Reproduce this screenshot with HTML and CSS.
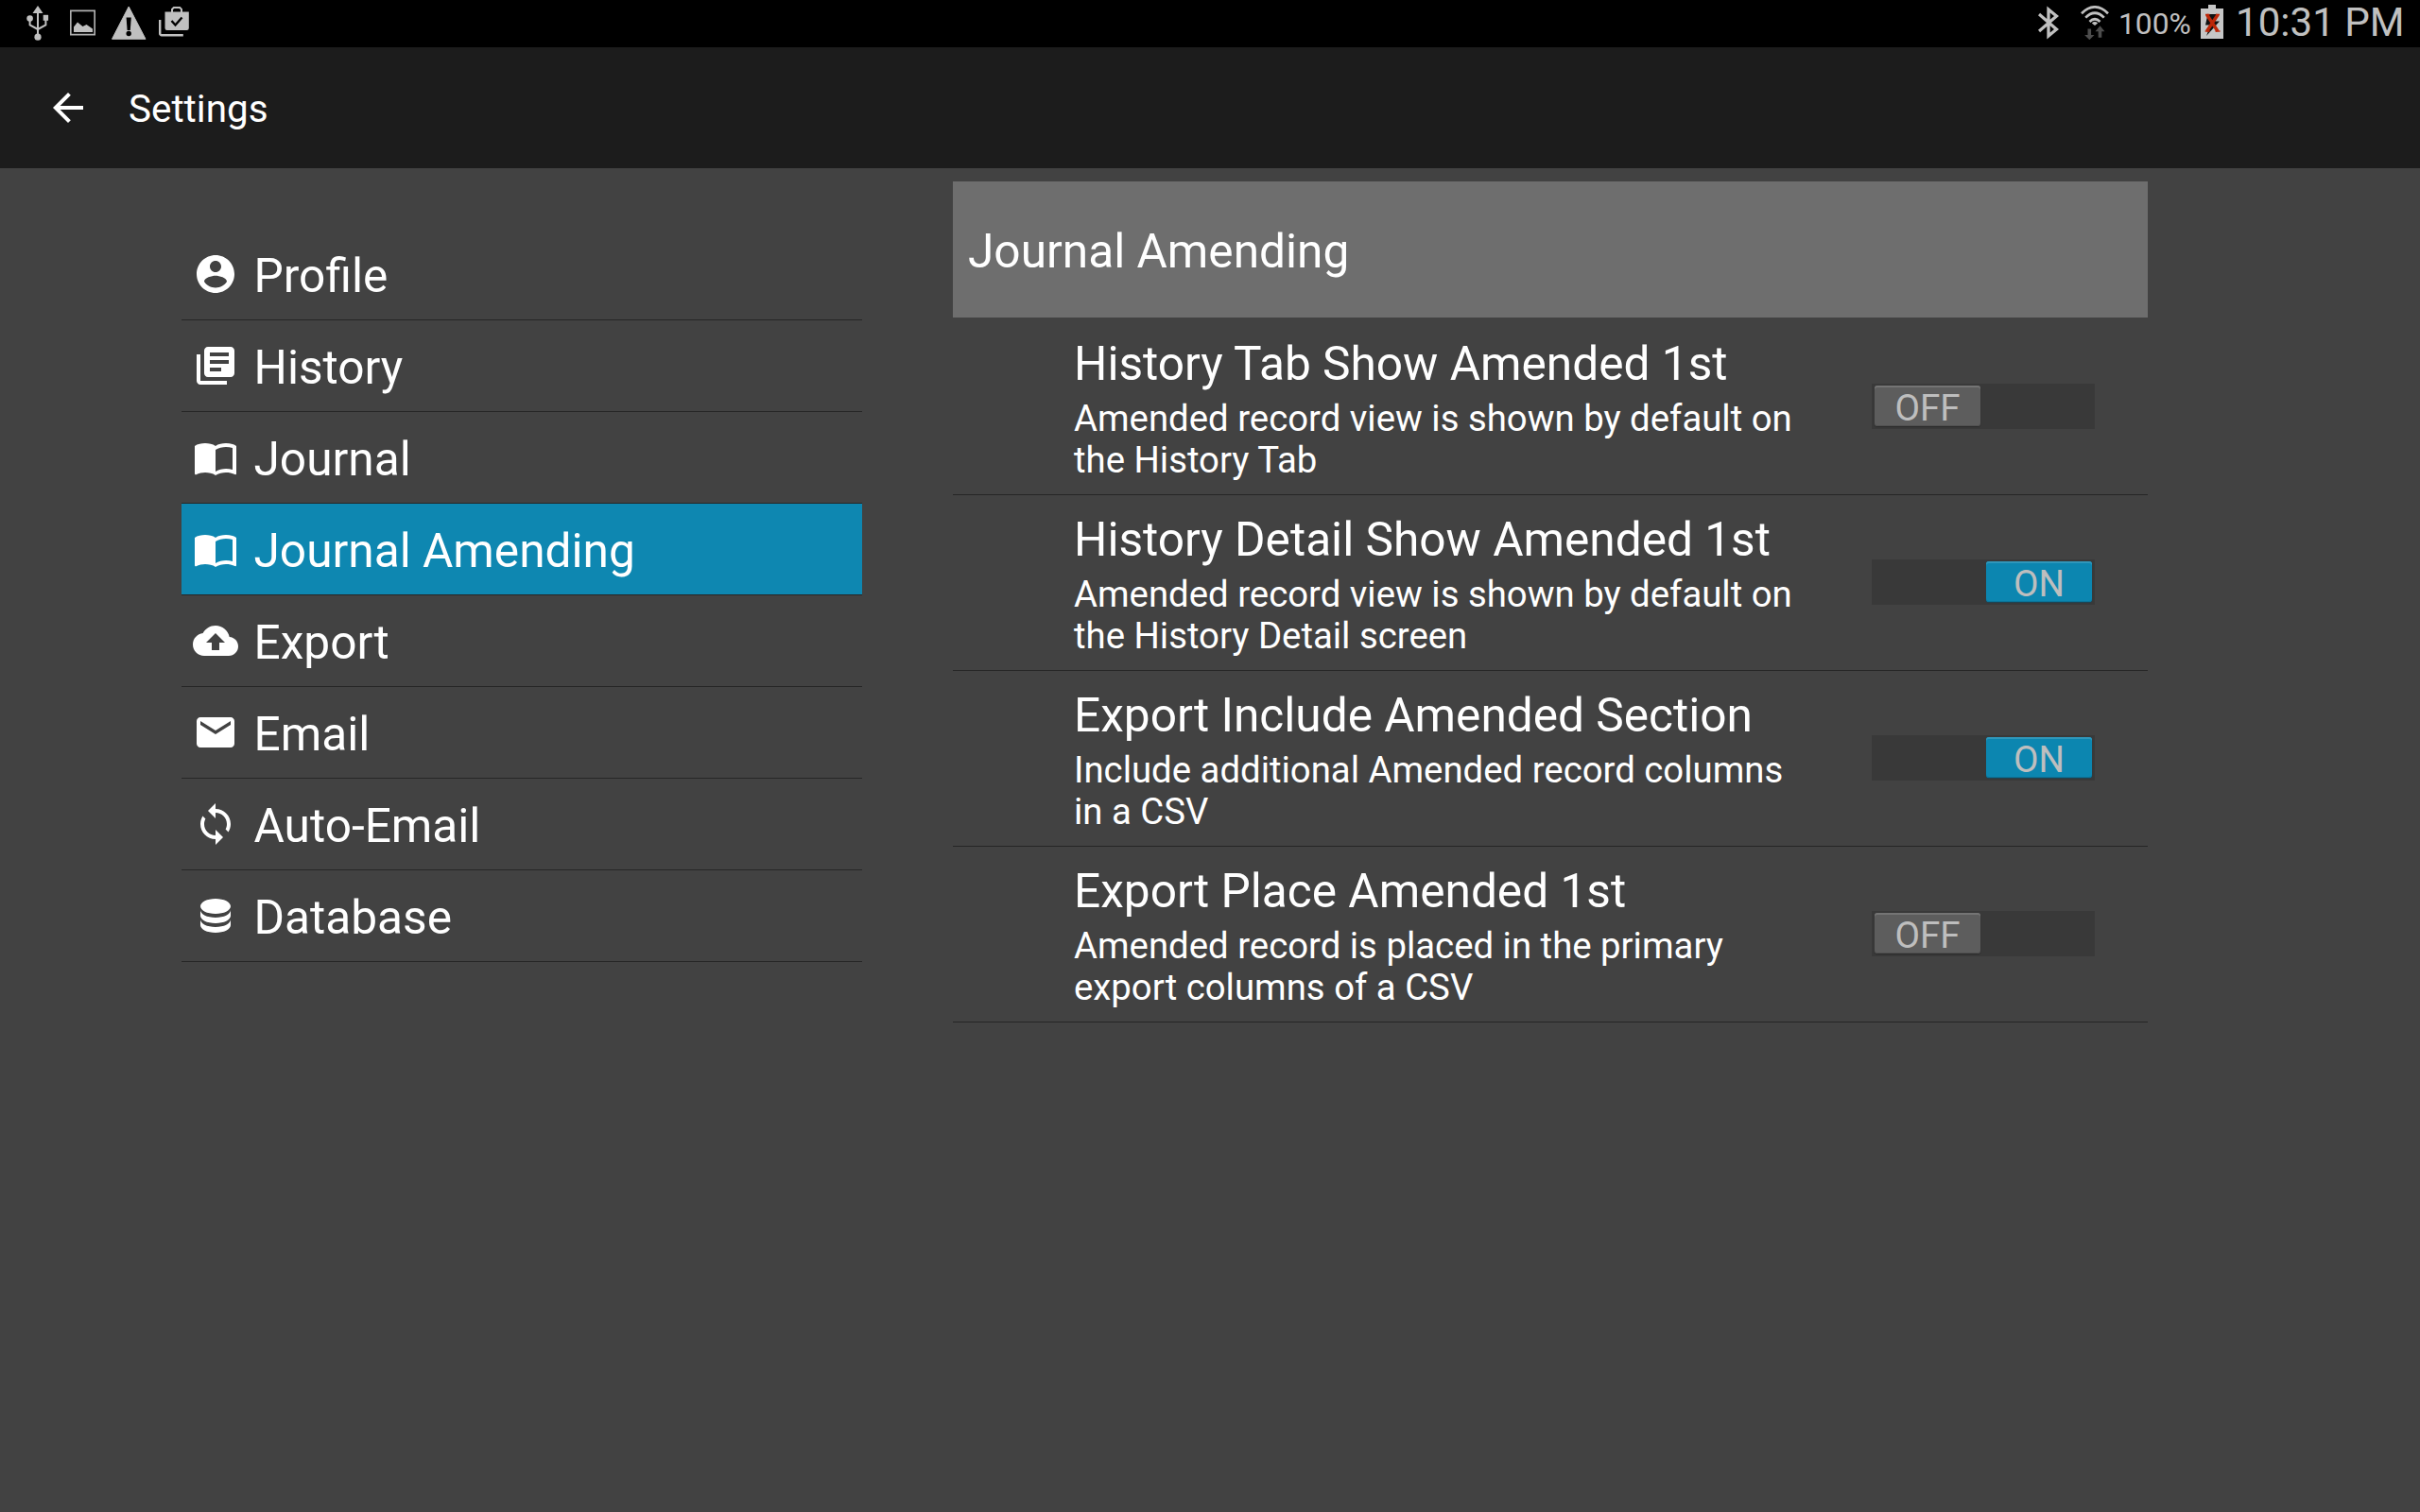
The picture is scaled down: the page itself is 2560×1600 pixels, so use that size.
FILE: index.html
```
<!DOCTYPE html>
<html lang="en">
<head>
<meta charset="utf-8">
<title>Settings</title>
<link rel="stylesheet" href="styles.css">
</head>
<body>
<svg class="defs" width="0" height="0" aria-hidden="true">
  <symbol id="book" viewBox="0 0 24 24"><path fill-rule="evenodd" d="M21,5C19.89,4.65 18.67,4.5 17.5,4.5C15.55,4.5 13.45,4.9 12,6C10.55,4.9 8.45,4.5 6.5,4.5C4.55,4.5 2.45,4.9 1,6V20.65C1,20.9 1.25,21.15 1.5,21.15C1.6,21.15 1.65,21.1 1.75,21.1C3.1,20.45 5.05,20 6.5,20C8.45,20 10.55,20.4 12,21.5C13.35,20.65 15.8,20 17.5,20C19.15,20 20.85,20.3 22.25,21.05C22.35,21.1 22.4,21.1 22.5,21.1C22.75,21.1 23,20.85 23,20.6V6C22.4,5.55 21.75,5.25 21,5M21,18.5C19.9,18.15 18.7,18 17.5,18C15.8,18 13.35,18.65 12,19.5V8C13.35,7.15 15.8,6.5 17.5,6.5C18.7,6.5 19.9,6.65 21,7V18.5Z"/></symbol>
</svg>

<header class="status">
  <div class="status-left">
    <svg width="24" height="38" viewBox="0 0 24 38" fill="#c0c0c0"><path d="M12 0l5.5 8h-11z"/><circle cx="12" cy="33.2" r="3.6"/><circle cx="3.6" cy="13.6" r="3.3"/><path d="M17.7 9.8h5.4v6h-5.4z"/><path d="M12 6v26M3.6 13v7.500l8.400 4.500M20.400 14v6.500L12 25" fill="none" stroke="#c0c0c0" stroke-width="2"/></svg>
    <svg class="gap-image" width="27" height="28" viewBox="0 0 27 28"><path d="M.8 1.300h25.400v25.400H.8z" fill="none" stroke="#b0b0b0" stroke-width="1.700"/><path d="M4 24v-5.500l4-5 5.500 4.500 4-2 6.500 4.500V24z" fill="#c0c0c0"/></svg>
    <svg class="gap-warn" width="37" height="36" viewBox="0 0 37 36"><path d="M18.200 1L36 35.300H.5z" fill="#c0c0c0" stroke="#c0c0c0" stroke-width="1" stroke-linejoin="round"/><path d="M15.600 12.500h5.200l-1 13.500h-3.200z" fill="#000"/><circle cx="18.200" cy="29.500" r="2.700" fill="#000"/></svg>
    <svg class="gap-shop" width="32" height="32" viewBox="0 0 32 32"><path d="M1.200 14v14.500a1.800 1.800 0 0 0 1.800 1.800h22.800" fill="none" stroke="#c0c0c0" stroke-width="2.400"/><path d="M14 6V2.800L15.800 1h6.400L24 2.800V6" fill="none" stroke="#c0c0c0" stroke-width="2"/><path d="M6.500 5.500h25.300v17.300a2.200 2.200 0 0 1-2.200 2.200H8.700a2.200 2.200 0 0 1-2.200-2.200z" fill="#c0c0c0"/><path d="M13.500 15l4 4.500 7-8" fill="none" stroke="#000" stroke-width="2.400"/></svg>
  </div>
  <div class="status-right">
    <svg width="22" height="36" viewBox="0 0 22 36" fill="none" stroke="#c0c0c0" stroke-width="3.300"><path d="M1 9l18.500 16-8.500 7V4l8.500 7L1 27"/></svg>
    <svg class="gap-wifi" width="30" height="36" viewBox="0 0 30 36"><g fill="none" stroke="#c0c0c0" stroke-width="2.700"><path d="M1 8.200q14-13.600 28 0M5.200 12.600q9.800-9.600 19.600 0M9.500 17q5.500-5.400 11 0"/></g><path d="M15 21l-3.200-2.600q3.200-2.900 6.400 0z" fill="#c0c0c0"/><path d="M7.500 24.500h3.600v6.500h3.400l-5.200 5.200L4.100 31h3.400zM18.700 33.700h3.600v-6.400h3.200l-5-6-5 6h3.200z" fill="#4c4c4c"/></svg>
    <span class="percent">100%</span>
    <svg class="gap-batt" width="24" height="36" viewBox="0 0 24 36"><path d="M8 0h8v4h8v32H0V4h8z" fill="#c6c6c6"/><path d="M7.500 10h10.500l-2.500 7.500h4.500L6 33l4.500-11.500H5z" fill="#111"/><path d="M6.500 10.500l11.500 17.500M18.200 10.500L6.500 28" stroke="#bd2708" stroke-width="3.400"/><path d="M4.700 28h5M15.500 28h5M5 10.500h4.500M16 10.500h4" stroke="#bd2708" stroke-width="1.300"/></svg>
    <span class="clock">10:31 PM</span>
  </div>
</header>

<div class="action-bar">
  <svg class="icon" viewBox="0 0 24 24"><path d="M20 11H7.830l5.590-5.590L12 4l-8 8 8 8 1.410-1.410L7.830 13H20v-2z"/></svg>
  <h1 class="screen-title">Settings</h1>
</div>

<main class="content">
  <nav class="menu">
    <a class="menu-item"><svg class="icon" viewBox="0 0 24 24"><path d="M12 2C6.480 2 2 6.480 2 12s4.480 10 10 10 10-4.480 10-10S17.520 2 12 2zm0 3c1.660 0 3 1.340 3 3s-1.340 3-3 3-3-1.340-3-3 1.340-3 3-3zm0 14.200c-2.500 0-4.710-1.280-6-3.220.03-1.990 4-3.080 6-3.080 1.990 0 5.970 1.090 6 3.080-1.290 1.940-3.500 3.220-6 3.220z"/></svg><span>Profile</span></a>
    <a class="menu-item"><svg class="icon" viewBox="0 0 24 24"><path d="M4 6H2v14c0 1.100.9 2 2 2h14v-2H4V6zm16-4H8c-1.100 0-2 .9-2 2v12c0 1.100.9 2 2 2h12c1.100 0 2-.9 2-2V4c0-1.100-.9-2-2-2zm-1 9H9V9h10v2zm-4 4H9v-2h6v2zm4-8H9V5h10v2z"/></svg><span>History</span></a>
    <a class="menu-item"><svg class="icon"><use href="#book"/></svg><span>Journal</span></a>
    <a class="menu-item selected"><svg class="icon"><use href="#book"/></svg><span>Journal Amending</span></a>
    <a class="menu-item"><svg class="icon" viewBox="0 0 24 24"><path d="M19.350 10.040C18.670 6.590 15.640 4 12 4 9.110 4 6.600 5.640 5.350 8.040 2.340 8.360 0 10.910 0 14c0 3.310 2.690 6 6 6h13c2.760 0 5-2.240 5-5 0-2.640-2.050-4.780-4.650-4.960zM14 13v4h-4v-4H7l5-5 5 5h-3z"/></svg><span>Export</span></a>
    <a class="menu-item"><svg class="icon" viewBox="0 0 24 24"><path d="M20 4H4c-1.100 0-1.990.9-1.990 2L2 18c0 1.100.9 2 2 2h16c1.100 0 2-.9 2-2V6c0-1.100-.9-2-2-2zm0 4l-8 5-8-5V6l8 5 8-5v2z"/></svg><span>Email</span></a>
    <a class="menu-item"><svg class="icon" viewBox="0 0 24 24"><path d="M12 4V1L8 5l4 4V6c3.310 0 6 2.690 6 6 0 1.010-.25 1.970-.7 2.800l1.460 1.460C19.540 15.030 20 13.570 20 12c0-4.420-3.580-8-8-8zm0 14c-3.310 0-6-2.690-6-6 0-1.010.25-1.970.7-2.800L5.240 7.740C4.460 8.970 4 10.430 4 12c0 4.420 3.580 8 8 8v3l4-4-4-4v3z"/></svg><span>Auto-Email</span></a>
    <a class="menu-item"><svg class="icon" viewBox="0 0 24 24"><path d="M12,3C7.580,3 4,4.790 4,7C4,9.210 7.580,11 12,11C16.420,11 20,9.210 20,7C20,4.790 16.420,3 12,3M4,9V12C4,14.210 7.580,16 12,16C16.420,16 20,14.210 20,12V9C20,11.210 16.420,13 12,13C7.580,13 4,11.210 4,9M4,14V17C4,19.210 7.580,21 12,21C16.420,21 20,19.210 20,17V14C20,16.210 16.420,18 12,18C7.580,18 4,16.210 4,14Z"/></svg><span>Database</span></a>
  </nav>

  <section class="panel">
    <h2 class="panel-title">Journal Amending</h2>
    <div class="option">
      <div class="option-text"><h3>History Tab Show Amended 1st</h3><p>Amended record view is shown by default on the History Tab</p></div>
      <div class="toggle"><span class="thumb">OFF</span></div>
    </div>
    <div class="option">
      <div class="option-text"><h3>History Detail Show Amended 1st</h3><p>Amended record view is shown by default on the History Detail screen</p></div>
      <div class="toggle on"><span class="thumb">ON</span></div>
    </div>
    <div class="option">
      <div class="option-text"><h3>Export Include Amended Section</h3><p>Include additional Amended record columns in a CSV</p></div>
      <div class="toggle on"><span class="thumb">ON</span></div>
    </div>
    <div class="option">
      <div class="option-text"><h3>Export Place Amended 1st</h3><p>Amended record is placed in the primary export columns of a CSV</p></div>
      <div class="toggle"><span class="thumb">OFF</span></div>
    </div>
  </section>
</main>
</body>
</html>
```

FILE: styles.css
```
* { box-sizing: border-box; }
body {
  margin: 0;
  width: 2560px;
  height: 1600px;
  overflow: hidden;
  background: #424242;
  color: #fff;
  font-family: Roboto, "Liberation Sans", sans-serif;
}
h1, h2, h3, p { margin: 0; font-weight: 400; }
svg { display: block; flex: none; }
.defs { position: absolute; }
.icon { width: 48px; height: 48px; fill: #fff; }

.status {
  display: flex;
  justify-content: space-between;
  height: 50px;
  padding: 0 17px 0 28px;
  background: #000;
  color: #c0c0c0;
}
.status-left, .status-right { display: flex; align-items: flex-start; }
.status-left { padding-top: 6px; }
.status-right { padding-top: 6px; white-space: nowrap; }
.gap-image { margin: 4px 0 0 22px; }
.gap-warn { margin-left: 17px; }
.gap-shop { margin: 1px 0 0 13px; }
.gap-wifi { margin-left: 23px; }
.percent { width: 87px; margin: -6px 0 0 10px; font-size: 31.8px; line-height: 50px; }
.gap-batt { margin-top: -1px; }
.clock { width: 178px; margin: -7px 0 0 13px; font-size: 42.1px; line-height: 50px; }

.action-bar {
  display: flex;
  align-items: center;
  gap: 40px;
  height: 128px;
  padding-left: 48px;
  background: #1c1c1c;
}
.screen-title { padding-top: 4px; font-size: 40.4px; line-height: 48px; }

.content { display: flex; gap: 96px; padding: 14px 288px 0 192px; }
.menu { width: 720px; padding-top: 50px; }
.menu-item {
  display: flex;
  align-items: center;
  gap: 16.5px;
  height: 97px;
  padding-left: 12px;
  border-bottom: 1px solid #262626;
  font-size: 49.6px;
  line-height: 58px;
}
.menu-item span { padding-top: 4px; }
.selected { background: #0e87b1; }

.panel { flex: 1; }
.panel-title {
  height: 144px;
  margin-bottom: 2px;
  padding: 4px 16px 0;
  background: #6e6e6e;
  font-size: 49.6px;
  line-height: 140px;
}
.option {
  display: flex;
  justify-content: space-between;
  height: 186px;
  padding: 0 56px 0 128px;
  border-bottom: 1px solid #262626;
}
.option-text { width: 776px; padding-top: 19px; }
.option-text h3 { font-size: 49.6px; line-height: 56px; white-space: nowrap; }
.option-text p { margin-top: 8px; font-size: 38.35px; line-height: 44px; }

.toggle {
  display: flex;
  width: 236px;
  height: 48px;
  margin-top: 68px;
  padding: 2px 3px;
  background: #393939;
}
.toggle.on { justify-content: flex-end; }
.thumb {
  width: 112px;
  height: 43px;
  padding-top: 2px;
  border-radius: 3px;
  background: #5d5d5d;
  box-shadow: inset 0 2px 0 #747474, inset 0 -1px 0 #505050, 0 1px 1px #2c2c2c;
  color: #bebebe;
  font-size: 38.6px;
  line-height: 44px;
  text-align: center;
}
.on .thumb {
  background: #0c86b0;
  box-shadow: inset 0 2px 0 #2f97bb, inset 0 -1px 0 #0a7499, 0 1px 1px #1e4555;
}
```
